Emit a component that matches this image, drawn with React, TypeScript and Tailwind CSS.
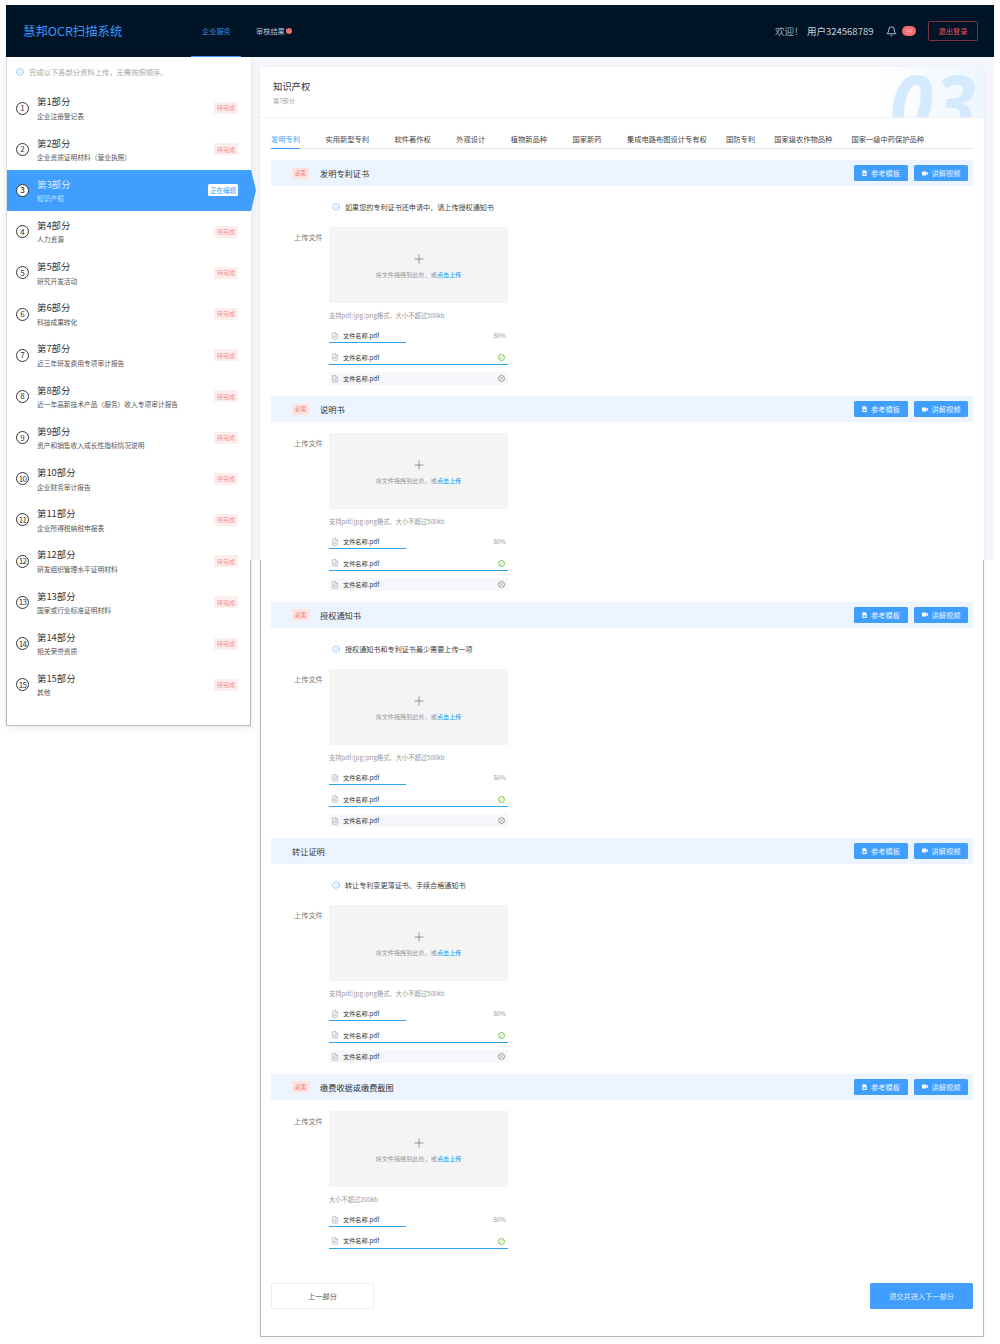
import React from "react";
import { Info, Plus, FileText, Bell, Check, X } from "lucide-react";

const parts = [
  "企业注册登记表",
  "企业资质证明材料（营业执照）",
  "知识产权",
  "人力资源",
  "研究开发活动",
  "科技成果转化",
  "近三年研发费用专项审计报告",
  "近一年高新技术产品（服务）收入专项审计报告",
  "资产和销售收入成长性指标情况说明",
  "企业财务审计报告",
  "企业所得税纳税申报表",
  "研发组织管理水平证明材料",
  "国家或行业标准证明材料",
  "相关荣誉资质",
  "其他",
];

const tabs = ["发明专利", "实用新型专利", "软件著作权", "外观设计", "植物新品种", "国家新药", "集成电路布图设计专有权", "国防专利", "国家级农作物品种", "国家一级中药保护品种"];

function SideRow({ n, sub }: { n: number; sub: string }) {
  const active = n === 3;
  return (
    <div className={active ? "relative flex h-[41.2px] w-[250px] items-center bg-[#409eff] pl-[10px] pr-[18px] [clip-path:polygon(0_0,245px_0,250px_50%,245px_100%,0_100%)]" : "flex h-[41.2px] items-center pl-[10px] pr-[13px]"}>
      <div className={`flex h-[13px] w-[13px] shrink-0 items-center justify-center rounded-full border border-[#333] text-[8px] leading-none ${active ? "bg-white font-medium text-[#333]" : "text-[#333]"} ${n > 9 ? "tracking-[-0.6px]" : ""}`}>{n}</div>
      <div className="ml-[8px] flex-1">
        <div className={`text-[9.4px] leading-[14px] ${active ? "text-[#dcecff]" : "text-[#333]"}`}>第{n}部分</div>
        <div className={`mt-[2.5px] text-[6.72px] leading-[11px] ${active ? "text-[#cfe5ff]" : "text-[#555]"}`}>{sub}</div>
      </div>
      {active ? (
        <div className="flex h-[12px] w-[30px] items-center justify-center rounded-[1.5px] bg-white text-[6.4px] text-[#409eff]">正在编辑</div>
      ) : (
        <div className="flex h-[12px] w-[24px] items-center justify-center rounded-[1.5px] bg-[#fdeeee] text-[6.2px] text-[#f78f8f]">待完成</div>
      )}
    </div>
  );
}

function Band({ title, required = true }: { title: string; required?: boolean }) {
  return (
    <div className="flex h-[26.6px] items-center bg-[#ecf5ff] pr-[5px]">
      {required ? (
        <>
          <div className="ml-[21px] flex h-[11px] w-[17px] items-center justify-center rounded-[1.5px] bg-[#fde2e2] text-[5.6px] text-[#f56c6c]">必需</div>
          <div className="ml-[11px] text-[8.2px] text-[#333]">{title}</div>
        </>
      ) : (
        <div className="ml-[21px] text-[8.2px] text-[#333]">{title}</div>
      )}
      <div className="ml-auto flex gap-[6px]">
        <div className="flex h-[16.5px] w-[54px] items-center justify-center gap-[4px] rounded-[1.5px] bg-[#409eff] text-[7.2px] text-[#e6f2ff]">
          <svg width="5" height="6.5" viewBox="0 0 6 7"><path d="M0.5 0H4L5.6 1.7V7H0.5Z" fill="#fff" /><rect x="1.6" y="3.6" width="2.8" height="1.9" fill="#409eff" /></svg>
          参考模板
        </div>
        <div className="flex h-[16.5px] w-[54px] items-center justify-center gap-[4px] rounded-[1.5px] bg-[#409eff] text-[7.2px] text-[#e6f2ff]">
          <svg width="6" height="5" viewBox="0 0 6 5"><rect x="0" y="0.4" width="4.4" height="4.2" rx="0.8" fill="#fff" /><path d="M4.4 2 6 1V4L4.4 3Z" fill="#fff" /></svg>
          讲解视频
        </div>
      </div>
    </div>
  );
}

function FileRow({ kind }: { kind: 0 | 1 | 2 }) {
  return (
    <div className={`relative flex h-[13px] w-[179px] items-center pl-[2px] pr-[2px] ${kind === 2 ? "bg-[#f5f7fa]" : ""}`}>
      <FileText size={8} className="text-[#888]" strokeWidth={1.3} />
      <span className="ml-[4px] text-[6.2px] text-[#333]">文件名称.pdf</span>
      <span className="ml-auto flex items-center">
        {kind === 0 && <span className="text-[6.2px] text-[#999]">50%</span>}
        {kind === 1 && (
          <span className="mr-[1px] flex h-[7px] w-[7px] items-center justify-center rounded-full border border-[#7cc44d]"><Check size={5} className="text-[#7cc44d]" strokeWidth={3} /></span>
        )}
        {kind === 2 && (
          <span className="mr-[1px] flex h-[7px] w-[7px] items-center justify-center rounded-full border border-[#999]"><X size={5} className="text-[#999]" strokeWidth={3} /></span>
        )}
      </span>
      {kind === 0 && <div className="absolute bottom-[-1px] left-0 h-[1.4px] w-[77px] bg-[#2aa5f0]" />}
      {kind === 1 && <div className="absolute bottom-[-1.5px] left-0 h-[1.4px] w-full bg-[#2aa5f0]" />}
    </div>
  );
}

function UploadBlock({ hint = "支持pdf/jpg/png格式、大小不超过500kb", three = true }: { hint?: string; three?: boolean }) {
  return (
    <div className="flex items-start pl-[23px]">
      <div className="w-[35px] pt-[5px] text-[7.2px] leading-[11px] text-[#777]">上传文件</div>
      <div className="w-[179px]">
        <div className="flex h-[76px] flex-col items-center bg-[#f4f4f5] pt-[25px]">
          <Plus size={14} strokeWidth={1.1} className="text-[#666]" />
          <div className="mt-[4px] text-[6.15px] leading-[10px] text-[#999]">将文件拖拽到此处，或<span className="font-medium text-[#2d9cec]">点击上传</span></div>
        </div>
        <div className="mt-[8px] h-[10px] text-[6.25px] leading-[10px] text-[#999]">{hint}</div>
        <div className="mt-[8.5px] flex flex-col gap-[8.5px]">
          <FileRow kind={0} />
          <FileRow kind={1} />
          {three && <FileRow kind={2} />}
        </div>
      </div>
    </div>
  );
}

function Note({ text }: { text: string }) {
  return (
    <div className="flex h-[40.5px] items-center pl-[61px] pt-[1px] text-[7.1px] text-[#444]">
      <Info size={8} className="mr-[5px] text-[#409eff]" strokeWidth={1.5} />
      {text}
    </div>
  );
}

function Section({ title, note, required, hint, three, after }: { title: string; note?: string; required?: boolean; hint?: string; three?: boolean; after?: string }) {
  return (
    <section>
      <Band title={title} required={required} />
      {note ? <Note text={note} /> : <div className="h-[10.4px]" />}
      <UploadBlock hint={hint} three={three} />
      <div className={after ?? "h-[10.4px]"} />
    </section>
  );
}

export default function App() {
  return (
    <div className="relative h-[1344px] w-[1000px] overflow-hidden bg-white pt-[5px] font-['Noto_Sans_CJK_SC','Noto_Sans',sans-serif]">
      <header className="mx-[6px] flex h-[52px] items-center bg-[#001428] pl-[17px] pr-[16px]">
        <div className="w-[168px] text-[12.4px] text-[#3d9bff]">慧邦OCR扫描系统</div>
        <div className="relative flex h-full w-[65px] items-center text-[7.2px] text-[#3a8ee6]">
          <span className="pl-[11px]">企业服务</span>
          <div className="absolute bottom-0 left-0 h-px w-[50px] bg-[#409eff]" />
        </div>
        <div className="flex items-center text-[7.2px] text-[#b9c0c8]">
          审核结果
          <span className="ml-[1px] h-[6.5px] w-[6.5px] rounded-full bg-[#f56c6c]" />
        </div>
        <div className="ml-auto flex items-center text-[9.5px] text-[#b9c2cc]">
          <span className="w-[32px] text-[#9aa4ae]">欢迎！</span>
          <span className="w-[79px] text-[#c8d0d8]">用户324568789</span>
          <Bell size={11} className="text-white" strokeWidth={1.6} />
          <span className="ml-[5px] flex h-[10px] w-[14px] items-center justify-center rounded-full bg-[#f56c6c] text-[6px] text-[#fbc]">99</span>
          <span className="ml-[12px] flex h-[20px] w-[50px] items-center justify-center rounded-[1.5px] border border-[#80323c] text-[7.2px] text-[#e0555f]">退出登录</span>
        </div>
      </header>
      <div className="mx-[6px] flex items-start bg-[linear-gradient(#f4f6fb_503px,#ffffff_503px)]">
        <aside className="relative z-10 h-[669px] w-[245px] shrink-0 bg-white shadow-[0_2px_8px_rgba(0,0,0,0.08)]">
          <div className="flex h-[30.5px] items-center pl-[10px] text-[7.3px] text-[#aaa]">
            <Info size={8} className="mr-[5px] text-[#409eff]" strokeWidth={1.5} />
            完成以下各部分资料上传，无需按照顺序。
          </div>
          {parts.map((sub, i) => (
            <SideRow key={i} n={i + 1} sub={sub} />
          ))}
          <div className="pointer-events-none absolute inset-x-0 bottom-0 top-[503px] border-x border-b border-[#b8b8b8]" />
          <div className="pointer-events-none absolute left-0 top-0 h-[503px] w-px bg-[#d9dde2]" />
        </aside>
        <main className="relative ml-[9px] mt-[10px] h-[1270px] w-[724px] shrink-0 bg-white shadow-[0_1px_4px_rgba(0,0,0,0.06)]">
          <div className="relative h-[51px] overflow-hidden border-b border-[#f0f0f0] bg-[linear-gradient(90deg,#ffffff_85%,#eef6ff_100%)] pl-[13px] pt-[13px]">
            <div className="text-[9.3px] leading-[13px] text-[#333]">知识产权</div>
            <div className="mt-[3px] text-[6.2px] leading-[10px] text-[#aaa]">第3部分</div>
            <div className="absolute right-[8px] top-[7px] text-[78px] font-bold italic leading-[56px] text-[#d6eaff] font-['Open_Sans',sans-serif]">03</div>
          </div>
          <div className="mx-[11px] mt-[13px] flex h-[18px] border-b border-[#e4e7ed] text-[7.25px] leading-[16px] text-[#444]">
            {tabs.map((t, i) => (
              <div key={t} className={`h-[18px] whitespace-nowrap ${i === 0 ? "border-b border-[#409eff] text-[#409eff]" : i < 7 ? "ml-[25.5px]" : "ml-[19.2px]"}`}>{t}</div>
            ))}
          </div>
          <div className="mx-[11px] mt-[10.8px]">
            <Section title="发明专利证书" note="如果您的专利证书还申请中，请上传授权通知书" />
            <Section title="说明书" />
            <Section title="授权通知书" note="授权通知书和专利证书最少需要上传一项" />
            <Section title="转让证明" required={false} note="转让专利变更薄证书、手续合格通知书" />
            <Section title="缴费收据或缴费截图" hint="大小不超过200kb" three={false} after="h-[35.8px]" />
            <div className="flex justify-between">
              <div className="flex h-[26px] w-[103px] items-center justify-center rounded-[1.5px] border border-[#eeeeee] bg-white text-[7.2px] text-[#555]">上一部分</div>
              <div className="flex h-[26px] w-[103px] items-center justify-center rounded-[1.5px] bg-[#409eff] text-[7.2px] text-[#dcecff]">提交并进入下一部分</div>
            </div>
          </div>
          <div className="pointer-events-none absolute inset-x-0 bottom-0 top-[493px] border-x border-b border-[#b8b8b8]" />
        </main>
      </div>
    </div>
  );
}
